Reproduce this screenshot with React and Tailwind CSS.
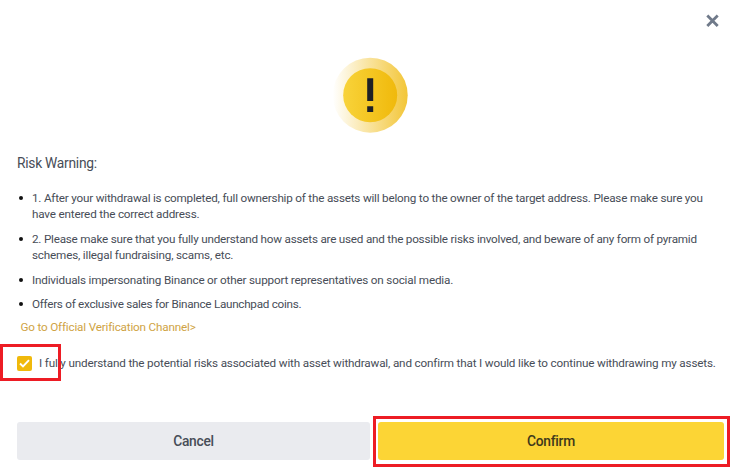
const risks = [
  {
    lines: [
      { text: '1. After your withdrawal is completed, full ownership of the assets will belong to the owner of the target address. Please make sure you', track: 'tracking-[-0.2px]' },
      { text: 'have entered the correct address.', track: 'tracking-[-0.18px]' },
    ],
  },
  {
    lines: [
      { text: '2. Please make sure that you fully understand how assets are used and the possible risks involved, and beware of any form of pyramid', track: 'tracking-[-0.217px]' },
      { text: 'schemes, illegal fundraising, scams, etc.', track: 'tracking-[-0.18px]' },
    ],
  },
  { lines: [{ text: 'Individuals impersonating Binance or other support representatives on social media.', track: 'tracking-[-0.18px]' }] },
  { lines: [{ text: 'Offers of exclusive sales for Binance Launchpad coins.', track: 'tracking-[-0.27px]' }] },
];

function WarningIcon() {
  return (
    <svg width="76" height="76" viewBox="0 0 76 76" role="img" aria-label="Warning">
      <defs>
        <linearGradient id="halo" x1="0" y1="0" x2="1" y2="0">
          <stop offset="0" stopColor="#f0b90b" stopOpacity="0" />
          <stop offset="1" stopColor="#f0b90b" stopOpacity="0.82" />
        </linearGradient>
        <linearGradient id="disc" x1="0" y1="0" x2="1" y2="0">
          <stop offset="0" stopColor="#f8d33a" />
          <stop offset="1" stopColor="#f0b90b" />
        </linearGradient>
      </defs>
      <circle cx="38.2" cy="38.2" r="37.5" fill="url(#halo)" />
      <circle cx="38.2" cy="38.2" r="27" fill="url(#disc)" />
      <path d="M35.2 21.2h6v22.8h-6zM35.2 49.2h6v5.8h-6z" fill="#1e2026" />
    </svg>
  );
}

export default function App() {
  return (
    <div className="relative h-[473px] w-[742px] overflow-hidden bg-white pl-[17px] pr-[18px] font-['Roboto','Liberation_Sans',sans-serif] text-[#474d57]">
      <header className="flex h-[57px] justify-end pr-[4px] pt-[13px]">
        <button aria-label="Close" className="h-[15px] w-[15px]">
          <svg width="15" height="15" viewBox="0 0 15 15" fill="none" stroke="#707a8a" strokeWidth="2.8">
            <path d="M2.3 2.5l10.4 10.4M12.7 2.5L2.3 12.9" />
          </svg>
        </button>
      </header>
      <div className="flex h-[97px] pl-[315px]">
        <WarningIcon />
      </div>
      <h1 className="h-[36px] text-[13.8px] leading-[18px] tracking-[-0.26px]">Risk Warning:</h1>
      <ul className="flex flex-col gap-[8px] text-[11.7px] leading-[16.4px]">
        {risks.map((risk) => (
          <li key={risk.lines[0].text} className="flex">
            <span className="mt-[6px] mr-[9px] ml-[2px] h-[4px] w-[4px] shrink-0 rounded-full bg-[#111]" />
            <div>
              {risk.lines.map((line) => (
                <div key={line.text} className="whitespace-nowrap"><span className={line.track}>{line.text}</span></div>
              ))}
            </div>
          </li>
        ))}
      </ul>
      <div className="mt-[7px] ml-[3.5px] h-[36px] text-[11.7px] leading-[16px] tracking-[-0.18px] whitespace-nowrap text-[#cfa344]">
        Go to Official Verification Channel&gt;
      </div>
      <label className="flex h-[16px] items-center whitespace-nowrap text-[11.7px] leading-[16px]">
        <span className="mr-[7px] flex h-[15px] w-[15px] shrink-0 items-center justify-center rounded-[2px] bg-[#f0b90b]">
          <svg width="11" height="9" viewBox="0 0 11 9" fill="none" stroke="white" strokeWidth="1.9">
            <path d="M1 4.5l3 3L10 1.2" />
          </svg>
        </span>
        <span className="tracking-[-0.163px]">I fully understand the potential risks associated with asset withdrawal, and confirm that I would like to continue withdrawing my assets.</span>
      </label>
      <div className="mt-[51px] flex h-[38px] gap-[8px] text-[13.8px] font-medium tracking-[-0.28px]">
        <button className="w-[353px] rounded-[3px] bg-[#eaebef]">Cancel</button>
        <button className="w-[346px] rounded-[3px] bg-[#fcd535] text-[#40391b]">Confirm</button>
      </div>
      <div className="absolute top-[344px] left-0 h-[37px] w-[61px] border-[3px] border-[#ed1c24]" />
      <div className="absolute top-[416px] left-[373px] h-[51px] w-[357px] border-[3px] border-[#ed1c24]" />
    </div>
  );
}
